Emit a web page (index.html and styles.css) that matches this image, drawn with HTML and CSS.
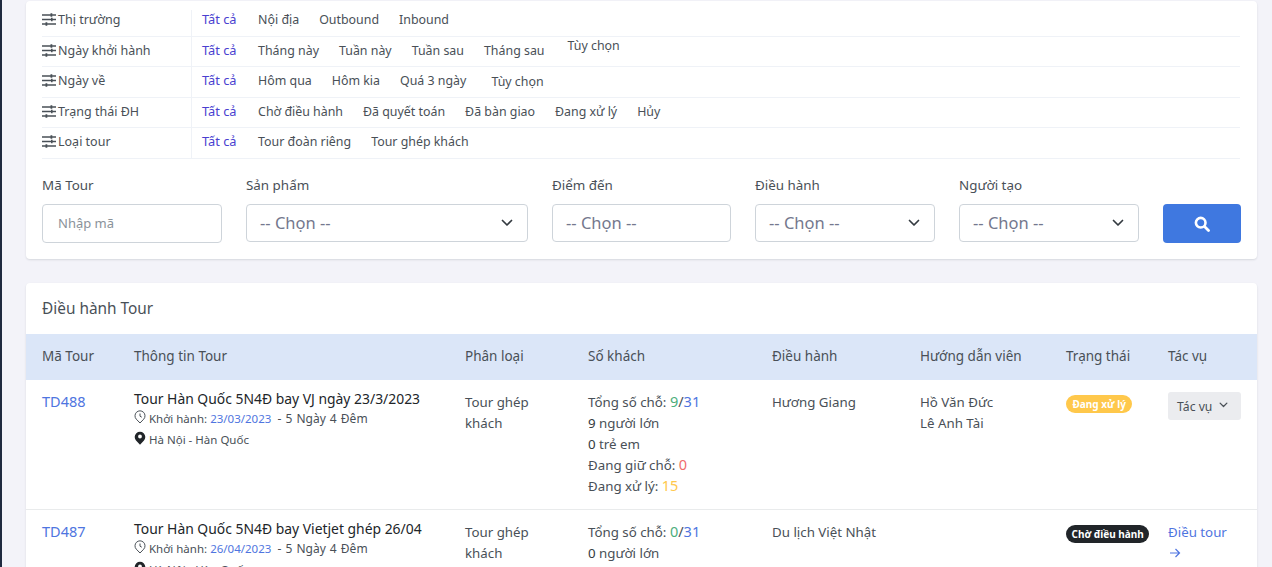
FILE: index.html
```html
<!DOCTYPE html>
<html lang="vi">
<head>
<meta charset="utf-8">
<title>Điều hành Tour</title>
<link rel="stylesheet" href="styles.css">
</head>
<body>
<svg class="defs" width="0" height="0" aria-hidden="true">
  <symbol id="tune" viewBox="0 0 14 13">
    <path d="M0 2h14M0 6.500h14M0 11h14" stroke="currentColor" stroke-width="1.400" fill="none"/>
    <path d="M8.500 0.300h1.800v3.400H8.500zM3.500 9.300h1.800v3.400H3.500zM9 4.800h1.600v3.400H9z" fill="currentColor"/>
  </symbol>
  <symbol id="chev" viewBox="0 0 12 8">
    <path d="M1.500 1.500 6 6l4.500-4.500" stroke="currentColor" stroke-width="1.700" fill="none" stroke-linecap="round" stroke-linejoin="round"/>
  </symbol>
  <symbol id="clock" viewBox="0 0 12 14">
    <path d="M6 13 2.300 9.200A5 5 0 1 1 9.700 9.200Z" stroke="currentColor" stroke-width="1" fill="none" stroke-linejoin="round"/>
    <path d="M6 3.500v2.700l1.800 1" stroke="currentColor" stroke-width="1" fill="none"/>
  </symbol>
  <symbol id="pin" viewBox="0 0 12 14">
    <path fill-rule="evenodd" d="M6 13.800 2 9.500A5.300 5.300 0 1 1 10 9.500ZM6 3.600a1.900 1.900 0 1 0 0 3.800 1.900 1.900 0 0 0 0-3.800Z" fill="currentColor"/>
  </symbol>
</svg>
<main class="page">
  <section class="card filters">
    <div class="f-row f-first">
      <div class="f-label"><svg class="tune"><use href="#tune"/></svg>Thị trường</div>
      <div class="f-items"><a class="on">Tất cả</a><a>Nội địa</a><a>Outbound</a><a>Inbound</a></div>
    </div>
    <div class="f-row">
      <div class="f-label"><svg class="tune"><use href="#tune"/></svg>Ngày khởi hành</div>
      <div class="f-items"><a class="on">Tất cả</a><a>Tháng này</a><a>Tuần này</a><a>Tuần sau</a><a>Tháng sau</a><a class="raised">Tùy chọn</a></div>
    </div>
    <div class="f-row">
      <div class="f-label"><svg class="tune"><use href="#tune"/></svg>Ngày về</div>
      <div class="f-items"><a class="on">Tất cả</a><a>Hôm qua</a><a>Hôm kia</a><a>Quá 3 ngày</a><a class="lowered">Tùy chọn</a></div>
    </div>
    <div class="f-row">
      <div class="f-label"><svg class="tune"><use href="#tune"/></svg>Trạng thái ĐH</div>
      <div class="f-items"><a class="on">Tất cả</a><a>Chờ điều hành</a><a>Đã quyết toán</a><a>Đã bàn giao</a><a>Đang xử lý</a><a>Hủy</a></div>
    </div>
    <div class="f-row">
      <div class="f-label"><svg class="tune"><use href="#tune"/></svg>Loại tour</div>
      <div class="f-items"><a class="on">Tất cả</a><a>Tour đoàn riêng</a><a>Tour ghép khách</a></div>
    </div>
    <form class="search">
      <div class="field"><label>Mã Tour</label><input class="control tall" placeholder="Nhập mã"></div>
      <div class="field"><label>Sản phẩm</label><div class="control select"><span>-- Chọn --</span><svg class="chev"><use href="#chev"/></svg></div></div>
      <div class="field"><label>Điểm đến</label><div class="control select"><span>-- Chọn --</span></div></div>
      <div class="field"><label>Điều hành</label><div class="control select"><span>-- Chọn --</span><svg class="chev"><use href="#chev"/></svg></div></div>
      <div class="field"><label>Người tạo</label><div class="control select"><span>-- Chọn --</span><svg class="chev"><use href="#chev"/></svg></div></div>
      <button class="go" type="button" aria-label="Tìm kiếm">
        <svg width="16" height="16" viewBox="0 0 16 16"><circle cx="6.700" cy="6.700" r="4.800" fill="none" stroke="#fff" stroke-width="2.600"/><path d="m10.500 10.500 4 4" stroke="#fff" stroke-width="2.800" stroke-linecap="round"/></svg>
      </button>
    </form>
  </section>

  <section class="card list">
    <h2 class="list-title">Điều hành Tour</h2>
    <table class="tours">
      <colgroup>
        <col class="c1"><col class="c2"><col class="c3"><col class="c4"><col class="c5"><col class="c6"><col class="c7"><col class="c8">
      </colgroup>
      <thead>
        <tr><th>Mã Tour</th><th>Thông tin Tour</th><th>Phân loại</th><th>Số khách</th><th>Điều hành</th><th>Hướng dẫn viên</th><th>Trạng thái</th><th>Tác vụ</th></tr>
      </thead>
      <tbody>
        <tr>
          <td><a class="link num">TD488</a></td>
          <td>
            <div class="t-name">Tour Hàn Quốc 5N4Đ bay VJ ngày 23/3/2023</div>
            <div class="t-sub"><svg class="ic"><use href="#clock"/></svg>Khởi hành: <span class="link">23/03/2023</span><span class="tail"> - 5 Ngày 4 Đêm</span></div>
            <div class="t-sub"><svg class="ic dark"><use href="#pin"/></svg>Hà Nội - Hàn Quốc</div>
          </td>
          <td>Tour ghép khách</td>
          <td>Tổng số chỗ: <span class="green num">9</span><span class="num">/</span><span class="link num">31</span><br><span class="strong">9</span> người lớn<br><span class="strong">0</span> trẻ em<br>Đang giữ chỗ: <span class="red num">0</span><br>Đang xử lý: <span class="amber num">15</span></td>
          <td>Hương Giang</td>
          <td>Hồ Văn Đức<br>Lê Anh Tài</td>
          <td><span class="badge amber-bg">Đang xử lý</span></td>
          <td><button class="act" type="button">Tác vụ<svg class="chev small"><use href="#chev"/></svg></button></td>
        </tr>
        <tr>
          <td><a class="link num">TD487</a></td>
          <td>
            <div class="t-name">Tour Hàn Quốc 5N4Đ bay Vietjet ghép 26/04</div>
            <div class="t-sub"><svg class="ic"><use href="#clock"/></svg>Khởi hành: <span class="link">26/04/2023</span><span class="tail"> - 5 Ngày 4 Đêm</span></div>
            <div class="t-sub"><svg class="ic dark"><use href="#pin"/></svg>Hà Nội - Hàn Quốc</div>
          </td>
          <td>Tour ghép khách</td>
          <td>Tổng số chỗ: <span class="green num">0</span><span class="num">/</span><span class="link num">31</span><br><span class="strong">0</span> người lớn</td>
          <td>Du lịch Việt Nhật</td>
          <td></td>
          <td><span class="badge dark-bg">Chờ điều hành</span></td>
          <td><a class="link tour-go">Điều tour<svg class="arrow" viewBox="0 0 12 10"><path d="M1 5h9.500M6.500 1l4 4-4 4" fill="none" stroke="currentColor" stroke-width="1.200"/></svg></a></td>
        </tr>
      </tbody>
    </table>
  </section>
</main>
</body>
</html>
```
FILE: styles.css
```css
* { box-sizing: border-box; }
html, body { margin: 0; height: 567px; overflow: hidden; }
body {
  background: #f3f3f9;
  border-left: 2px solid #1f2a40;
  font-family: "Noto Sans", "Open Sans", sans-serif;
  font-size: 13.300px;
  line-height: 21px;
  color: #495057;
}
.defs { position: absolute; }
.page { padding: 1px 15px 0 24px; height: 567px; overflow: hidden; }
.card {
  background: #fff;
  border-radius: 4px;
  box-shadow: 0 1px 2px rgba(56, 65, 74, .15);
}
.filters { padding: 0 16px 16px; }
.f-row {
  display: flex;
  height: 30px;
  margin-right: 1px;
  border-bottom: 1px solid #eff2f7;
}
.f-row:nth-child(odd) { height: 31px; }
.f-row.f-first { height: 36px; padding-top: 9px; }
.f-label {
  width: 150px;
  flex: none;
  display: flex;
  align-items: center;
  padding-bottom: 2px;
  border-right: 1px solid #eff2f7;
  font-size: 12.500px;
}
.tune { width: 14px; height: 13px; margin-right: 2px; color: #495057; flex: none; }
.f-items {
  display: flex;
  align-items: center;
  gap: 20px;
  padding: 0 0 2px 10px;
  font-size: 12.400px;
}
.f-row:nth-child(odd) .f-label, .f-row:nth-child(odd) .f-items { padding-bottom: 3px; }
.f-row.f-first .f-label, .f-row.f-first .f-items { padding-bottom: 7px; }
.on { color: #4a3fd0; margin-right: 1.500px; font-size: 12.800px; }
.raised { margin: 0 0 10px 3px; }
.lowered { margin: 2px 0 0 5px; }
.search {
  display: grid;
  grid-template-columns: 180px 282px 179px 180px 180px 78px;
  column-gap: 24px;
  align-items: start;
  padding-top: 16px;
}
.field label { display: block; margin-bottom: 8px; color: #495057; font-size: 13.400px; }
.control {
  display: block;
  width: 100%;
  height: 38px;
  border: 1px solid #ced4da;
  border-radius: 4px;
  background: #fff;
  padding: 0 15px;
  font: inherit;
  color: #495057;
}
.control.tall { height: 39px; padding-bottom: 1px; font-size: 13px; }
.control::placeholder { color: #8a929a; opacity: 1; }
.select {
  display: flex;
  align-items: center;
  justify-content: space-between;
  padding: 0 14px 1px 13px;
  font-size: 16.500px;
  color: #74788d;
}
.chev { width: 12px; height: 8px; color: #343a40; }
.select .chev { margin-top: 1px; }
.go {
  height: 39px;
  margin-top: 29px;
  border: 0;
  border-radius: 4px;
  background: #3f78e0;
  display: flex;
  align-items: center;
  justify-content: center;
  padding: 0;
}
.list { margin-top: 24px; }
.list-title {
  margin: 0;
  height: 51px;
  padding: 16px 16px 0;
  font-size: 15.400px;
  line-height: 20px;
  font-weight: 400;
  color: #495057;
}
.tours { width: 100%; border-collapse: collapse; table-layout: fixed; }
.c1 { width: 92px; } .c2 { width: 331px; } .c3 { width: 123px; } .c4 { width: 184px; }
.c5 { width: 148px; } .c6 { width: 146px; } .c7 { width: 102px; } .c8 { width: 105px; }
.tours th {
  height: 46px;
  padding: 0 16px 2px;
  background: #dbe6f8;
  text-align: left;
  font-weight: 400;
  font-size: 13.500px;
  color: #495057;
}
.tours td {
  padding: 12px 16px;
  vertical-align: top;
  border-bottom: 1px solid #e9ebec;
}
.link { color: #4f75e0; }
.num { font-size: 14.500px; line-height: 1; }
.green { color: #4cae7c; }
.red { color: #f06c6c; }
.amber { color: #ffc84b; }
.strong { color: #343a40; }
.t-name {
  margin-top: -3px;
  height: 19px;
  line-height: 19px;
  font-size: 13.900px;
  color: #212529;
  white-space: nowrap;
}
.t-sub { font-size: 11.500px; display: flex; align-items: center; white-space: pre; }
.tail { padding-left: 2px; font-size: 12px; word-spacing: 1px; }
.ic { width: 12px; height: 14px; margin: -4px 3px 0 0; color: #495057; flex: none; }
.ic.dark { color: #212529; }
.badge {
  display: inline-block;
  margin-top: 3px;
  padding: 0 6.500px;
  height: 18px;
  line-height: 18px;
  border-radius: 9px;
  font-size: 10px;
  font-weight: 700;
  color: #fff;
  white-space: nowrap;
  vertical-align: top;
}
.amber-bg { background: #ffc84b; }
.dark-bg { background: #212529; padding: 0 5.500px; }
.act {
  display: flex;
  align-items: center;
  width: 73px;
  height: 28px;
  padding: 0 0 0 9px;
  border: 0;
  border-radius: 3px;
  background: #ebecef;
  font: inherit;
  font-size: 12.200px;
  color: #495057;
}
.small { width: 9px; height: 6px; margin: -3px 0 0 7px; color: #495057; }
.tour-go { display: block; }
.arrow { display: block; width: 12px; height: 10px; margin: 5px 0 6px 1px; }
```
